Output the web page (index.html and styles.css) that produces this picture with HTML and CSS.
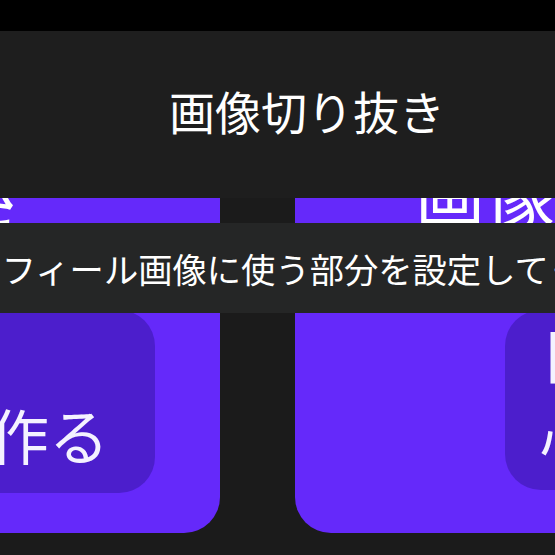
FILE: index.html
```html
<!DOCTYPE html>
<html lang="ja">
<head>
<meta charset="utf-8">
<title>画像切り抜き</title>
<link rel="stylesheet" href="styles.css">
</head>
<body>
<div class="screen">
  <div class="statusbar"></div>
  <header class="appbar">
    <h1 class="title">画像切り抜き</h1>
  </header>
  <main class="content">
    <div class="grid">
      <section class="card card-left">
        <h2 class="card-title title-left">落書き</h2>
        <div class="card-box box-left"><p class="box-text">新規<br>画像を作る</p></div>
      </section>
      <section class="card card-right">
        <h2 class="card-title title-right">画像から</h2>
        <div class="card-box box-right"><p class="box-text">日記から<br>心を込める</p></div>
      </section>
    </div>
    <div class="hint">プロフィール画像に使う部分を設定してください</div>
  </main>
</div>
</body>
</html>
```

FILE: styles.css
```css
html, body {
  margin: 0;
  padding: 0;
  width: 555px;
  height: 555px;
  overflow: hidden;
  background: #1c1c1c;
  font-family: "Noto Sans CJK JP", "Noto Sans", sans-serif;
  color: #ffffff;
}

.screen {
  margin-left: -300px;
  width: 1214px;
  height: 555px;
  display: flex;
  flex-direction: column;
}

.statusbar {
  height: 31px;
  background: #000000;
  flex: none;
}

.appbar {
  height: 167px;
  flex: none;
  background: #1e1e1e;
  display: flex;
  align-items: center;
  justify-content: center;
  padding-bottom: 10px;
  box-sizing: border-box;
}

.title {
  margin: 0;
  font-size: 46px;
  font-weight: 400;
  line-height: 1;
  color: #ffffff;
}

.content {
  position: relative;
  flex: 1;
  overflow: hidden;
  background: #1b1b1b;
}

.grid {
  display: flex;
  gap: 75px;
  margin-top: -40px;
  padding-left: 60px;
}

.card {
  width: 460px;
  height: 375px;
  flex: none;
  box-sizing: border-box;
  padding-top: 0;
  padding-bottom: 40px;
  background: #6529fa;
  border-radius: 36px;
  display: flex;
  flex-direction: column;
}

.card-title {
  margin: 0;
  font-size: 70px;
  font-weight: 400;
  line-height: 70px;
  white-space: nowrap;
  color: #ffffff;
}

.title-left {
  margin-left: 58px;
}

.title-right {
  margin-left: 120px;
}

.card-box {
  margin-top: auto;
  height: 183px;
  box-sizing: border-box;
  padding: 2px 0 0 35px;
  background: #4c1ecc;
  border-radius: 36px;
  overflow: hidden;
}

.box-left {
  margin-left: 14px;
  width: 381px;
}

.box-right {
  margin-left: 210px;
  width: 220px;
  height: 180px;
  margin-bottom: 3px;
}

.box-text {
  margin: 0;
  font-size: 60px;
  line-height: 81px;
  white-space: nowrap;
  color: #f4f2ff;
}

.hint {
  position: absolute;
  top: 25px;
  left: 0;
  right: 0;
  height: 90px;
  padding-left: 4px;
  background: #252626;
  font-size: 34.3px;
  line-height: 90px;
  text-align: center;
  white-space: nowrap;
  color: #ffffff;
}
```
